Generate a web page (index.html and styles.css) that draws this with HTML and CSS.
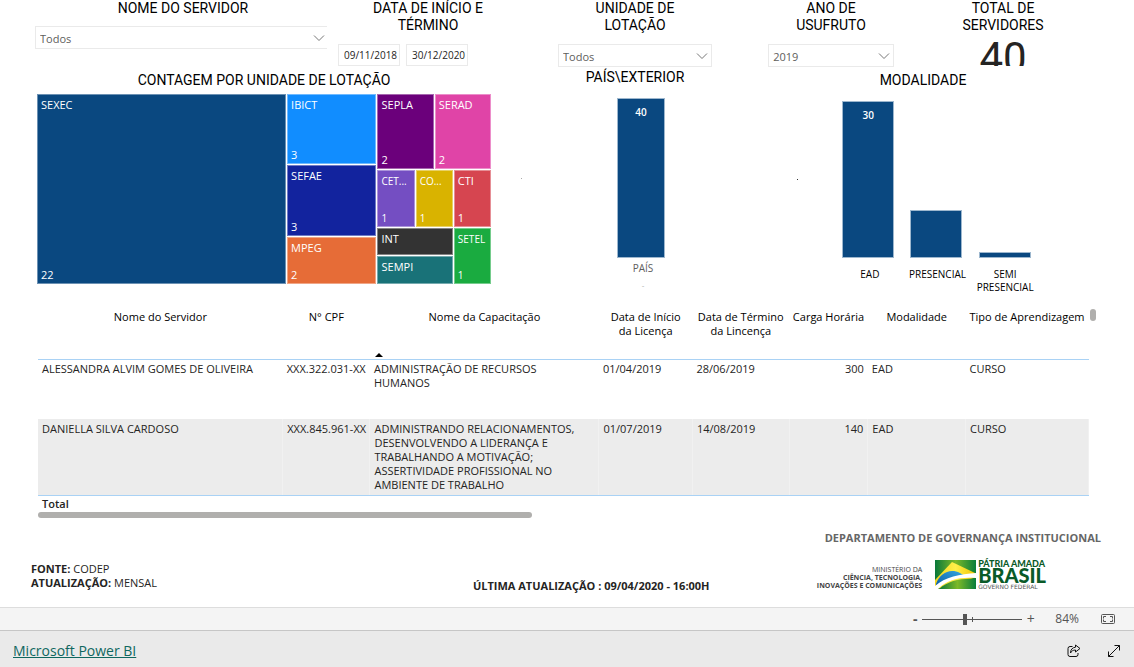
FILE: index.html
```html
<!DOCTYPE html>
<html lang="pt-BR">
<head>
<meta charset="utf-8">
<meta name="viewport" content="width=device-width, initial-scale=1">
<title>Microsoft Power BI</title>
<link rel="stylesheet" href="styles.css">
</head>
<body>
<main class="report">
  <section class="filters">
    <div class="filter filter-name">
      <label class="title" for="servidor">NOME DO SERVIDOR</label>
      <div class="picker picker-open">
        <select id="servidor"><option>Todos</option></select>
        <svg class="chevron" viewBox="0 0 12 8"><path d="M1 1.500 6 6.500 11 1.500"/></svg>
      </div>
    </div>
    <div class="filter filter-dates">
      <span class="title">DATA DE INÍCIO E<br>TÉRMINO</span>
      <div class="dates">
        <input type="text" value="09/11/2018" aria-label="Data de início">
        <input type="text" value="30/12/2020" aria-label="Data de término">
      </div>
    </div>
    <div class="filter filter-unit">
      <label class="title" for="unidade">UNIDADE DE<br>LOTAÇÃO</label>
      <div class="picker">
        <select id="unidade"><option>Todos</option></select>
        <svg class="chevron" viewBox="0 0 12 8"><path d="M1 1.500 6 6.500 11 1.500"/></svg>
      </div>
    </div>
    <div class="filter filter-year">
      <label class="title" for="ano">ANO DE<br>USUFRUTO</label>
      <div class="picker">
        <select id="ano"><option>2019</option></select>
        <svg class="chevron" viewBox="0 0 12 8"><path d="M1 1.500 6 6.500 11 1.500"/></svg>
      </div>
    </div>
    <div class="filter filter-total">
      <span class="title">TOTAL DE<br>SERVIDORES</span>
      <output class="total-value">40</output>
    </div>
  </section>

  <section class="charts">
    <div class="chart">
      <h2 class="title title-low">CONTAGEM POR UNIDADE DE LOTAÇÃO</h2>
      <div class="treemap">
        <div class="tile sexec"><span>SEXEC</span><span>22</span></div>
        <div class="stack">
          <div class="tile ibict"><span>IBICT</span><span>3</span></div>
          <div class="tile sefae"><span>SEFAE</span><span>3</span></div>
          <div class="tile mpeg"><span>MPEG</span><span>2</span></div>
        </div>
        <div class="stack-right">
          <div class="pair">
            <div class="tile sepla"><span>SEPLA</span><span>2</span></div>
            <div class="tile serad"><span>SERAD</span><span>2</span></div>
          </div>
          <div class="thirds">
            <div class="tile cet"><span>CET...</span><span>1</span></div>
            <div class="tile co"><span>CO...</span><span>1</span></div>
            <div class="tile cti"><span>CTI</span><span>1</span></div>
            <div class="tile int"><span>INT</span></div>
            <div class="tile sempi"><span>SEMPI</span></div>
            <div class="tile setel"><span>SETEL</span><span>1</span></div>
          </div>
        </div>
      </div>
    </div>
    <div class="chart chart-country">
      <h2 class="title">PAÍS\EXTERIOR</h2>
      <div class="country-plot">
        <span class="speck speck-light"></span>
        <div class="bar country-bar">40</div>
      </div>
      <div class="country-axis">PAÍS</div>
      <div class="country-axis country-mark">-</div>
    </div>
    <div class="chart chart-mode">
      <h2 class="title title-low">MODALIDADE</h2>
      <div class="mode-plot">
        <span class="speck"></span>
        <div class="bar" style="height:157px">30</div>
        <div class="bar" style="height:48px"></div>
        <div class="bar" style="height:6px"></div>
      </div>
      <div class="mode-axis"><span>EAD</span><span>PRESENCIAL</span><span>SEMI<br>PRESENCIAL</span></div>
    </div>
  </section>

  <section class="grid">
    <div class="grid-scroller">
      <table>
        <colgroup><col class="c-name"><col class="c-cpf"><col class="c-course"><col class="c-start"><col class="c-end"><col class="c-hours"><col class="c-mode"><col class="c-type"></colgroup>
        <thead>
          <tr><th>Nome do Servidor</th><th>N° CPF</th><th class="sorted">Nome da Capacitação<svg class="sort" viewBox="0 0 8 4"><path d="M0 4 4 0 8 4z"/></svg></th><th>Data de Início<br>da Licença</th><th>Data de Término<br>da Lincença</th><th>Carga Horária</th><th>Modalidade</th><th>Tipo de Aprendizagem</th></tr>
        </thead>
        <tbody>
          <tr><td>ALESSANDRA ALVIM GOMES DE OLIVEIRA</td><td>XXX.322.031-XX</td><td>ADMINISTRAÇÃO DE RECURSOS<br>HUMANOS</td><td>01/04/2019</td><td>28/06/2019</td><td class="num">300</td><td>EAD</td><td>CURSO</td></tr>
          <tr class="alt"><td>DANIELLA SILVA CARDOSO</td><td>XXX.845.961-XX</td><td>ADMINISTRANDO RELACIONAMENTOS,<br>DESENVOLVENDO A LIDERANÇA E<br>TRABALHANDO A MOTIVAÇÃO;<br>ASSERTIVIDADE PROFISSIONAL NO<br>AMBIENTE DE TRABALHO</td><td>01/07/2019</td><td>14/08/2019</td><td class="num">140</td><td>EAD</td><td>CURSO</td></tr>
        </tbody>
        <tfoot><tr><td colspan="8">Total</td></tr></tfoot>
      </table>
      <div class="scroll-x"></div>
    </div>
    <div class="scroll-y"></div>
  </section>

  <section class="credits">
    <p class="department">DEPARTAMENTO DE GOVERNANÇA INSTITUCIONAL</p>
    <div class="credits-row">
      <p class="source"><b>FONTE:</b> CODEP<br><b>ATUALIZAÇÃO:</b> MENSAL</p>
      <p class="updated">ÚLTIMA ATUALIZAÇÃO : 09/04/2020 - 16:00H</p>
      <div class="brand">
        <p class="ministry">MINISTÉRIO DA<br><b>CIÊNCIA, TECNOLOGIA,<br>INOVAÇÕES E COMUNICAÇÕES</b></p>
        <svg class="flag" viewBox="0 0 41 29">
          <defs>
            <linearGradient id="green" x1="0" y1="0" x2="1" y2="0"><stop offset="0" stop-color="#08783a"/><stop offset=".5" stop-color="#7db928"/><stop offset="1" stop-color="#087d3b"/></linearGradient>
            <linearGradient id="blue" x1="0" y1="1" x2="1" y2="0"><stop offset="0" stop-color="#0a5ca8"/><stop offset="1" stop-color="#36a8e0"/></linearGradient>
            <linearGradient id="gold" x1="0" y1="0" x2="1" y2="0"><stop offset="0" stop-color="#f0d31c"/><stop offset=".5" stop-color="#fff04a"/><stop offset="1" stop-color="#f2c500"/></linearGradient>
          </defs>
          <path fill="url(#green)" d="M0 0H41V29H0z"/>
          <path fill="url(#gold)" d="M0 20 17 2 40 13 41 17 10 29 0 28z"/>
          <path fill="url(#blue)" d="M1 24C5 13 15 8 25 13L30 16C18 16 9 20 1 27z"/>
          <path fill="#fff" d="M0 26C10 17 25 14 41 13V18C25 17 13 19 3 29H0z"/>
          <path fill="url(#green)" d="M4 29C14 20 27 18 41 19V29z"/>
        </svg>
        <p class="slogan"><span>PÁTRIA AMADA</span><strong>BRASIL</strong><small>GOVERNO FEDERAL</small></p>
      </div>
    </div>
  </section>
</main>

<div class="zoombar">
  <button type="button" class="step step-out" aria-label="Reduzir">-</button>
  <div class="zoom-track"><input type="range" min="0" max="100" value="42" aria-label="Zoom"></div>
  <button type="button" class="step" aria-label="Ampliar">+</button>
  <span class="zoom-value">84%</span>
  <button type="button" class="fit" aria-label="Ajustar à página"><svg viewBox="0 0 14 10"><rect x=".5" y=".5" width="13" height="9" rx="1"/><path d="M5 2.500H2.500V4.500M2.500 5.500V7.500H5M9 2.500H11.500V4.500M11.500 5.500V7.500H9"/></svg></button>
</div>
<footer class="appbar">
  <a href="#">Microsoft Power BI</a>
  <div class="actions">
    <button type="button" aria-label="Compartilhar"><svg viewBox="0 0 14 14"><path d="M5.500 2.500H3A2 2 0 0 0 1 4.500V10.500A2 2 0 0 0 3 12.500H9A2 2 0 0 0 11 10.500V9M8.500 1 13 4.500 8.500 8V6C6 6 4.500 7 3.500 9 3.500 5.500 5.500 3.500 8.500 3.200z"/></svg></button>
    <button type="button" aria-label="Tela inteira"><svg viewBox="0 0 14 14"><path d="M1.500 12.500 12.500 1.500M7.500 1.500H12.500V6.500M1.500 7.500V12.500H6.500"/></svg></button>
  </div>
</footer>
</body>
</html>
```
FILE: styles.css
```css
* { box-sizing: border-box; }

body {
  margin: 0;
  min-height: 100vh;
  display: flex;
  flex-direction: column;
  background: #fff;
  color: #252423;
  font: 11px/14px "Open Sans", "Noto Sans", sans-serif;
}

h2, p { margin: 0; }
button, input, select { font: inherit; color: inherit; }
button { padding: 0; border: 0; background: none; }
svg { display: block; fill: none; stroke: currentColor; }

.report { flex: 1; }

.title {
  display: block;
  text-align: center;
  color: #000;
  font: 400 14px/17px Roboto, sans-serif;
}
.title-low { padding-top: 3px; }

/* Filters */
.filters {
  display: grid;
  grid-template-columns: 296fr 194fr 220fr 172fr 172fr;
  padding: 0 45px 0 35px;
}
.picker { position: relative; margin: 10px auto 0; }
.filter-name .picker { margin: 9px 4px 0 0; }
.filter-unit .picker { width: 70%; }
.filter-year .picker { width: 73%; }
.picker select {
  appearance: none;
  display: block;
  width: 100%;
  height: 23px;
  padding: 2px 4px 0;
  border: 1px solid #eaeaea;
  border-radius: 0;
  background: #fff;
  color: #605e5c;
}
.picker-open select { border-right: 0; }
.chevron {
  position: absolute;
  top: 8px;
  right: 4px;
  width: 12px;
  height: 8px;
  color: #777;
  pointer-events: none;
}
.picker-open .chevron { right: 2px; }
.dates { display: flex; gap: 6px; padding: 10px 0 0 7px; }
.dates input {
  width: 62px;
  height: 22px;
  padding: 0 0 0 5px;
  border: 1px solid #eaeaea;
  font-size: 10px;
}
.total-value {
  display: block;
  height: 24px;
  margin-top: 8px;
  overflow: hidden;
  text-align: center;
  font: 400 42px/32px Roboto, sans-serif;
}

/* Charts */
.charts {
  display: grid;
  grid-template-columns: 454fr 288fr 288fr;
  padding: 2px 67px 0 37px;
}
.treemap {
  display: grid;
  grid-template-columns: 248fr 89fr 113fr;
  gap: 1px;
  height: 190px;
  margin-top: 5px;
}
.stack { display: grid; grid-template-rows: 70fr 70fr 47fr; gap: 1px; }
.stack-right { display: grid; grid-template-rows: 75fr 114fr; gap: 1px; }
.pair { display: grid; grid-template-columns: 1fr 1fr; gap: 1px; }
.thirds {
  display: grid;
  grid-template-columns: repeat(3, 1fr);
  grid-template-rows: 56fr 27fr 28fr;
  gap: 1px;
}
.tile {
  display: flex;
  flex-direction: column;
  justify-content: space-between;
  min-width: 0;
  min-height: 0;
  padding: 3px 3px 1px;
  border: 1px solid rgba(255, 255, 255, 0.4);
  color: #fff;
  white-space: nowrap;
}
.sexec { background-color: #0a4880; }
.ibict { background-color: #118dff; }
.sefae { background-color: #12239e; }
.mpeg { background-color: #e66c37; }
.sepla { background-color: #6b007b; }
.serad { background-color: #e044a7; }
.cet { background-color: #744ec2; }
.co { background-color: #d9b300; }
.cti { background-color: #d64550; }
.int { grid-column: 1 / 3; background-color: #333; }
.sempi { grid-column: 1 / 3; background-color: #197278; }
.setel { grid-column: 3; grid-row: 2 / 4; background-color: #1aab40; }
.setel, .cet, .co { font-size: 10px; }

.bar {
  padding-top: 6px;
  border: 1px solid #9db7ce;
  background: #0a4880;
  color: #fff;
  text-align: center;
  font-size: 10px;
  font-weight: 600;
}
.bar:empty { padding: 0; }
.country-plot, .mode-plot { position: relative; }
.country-plot { padding: 12px 0 0 12px; }
.country-bar { width: 48px; height: 160px; margin: 0 auto; }
.country-axis { padding: 3px 0 0 16px; color: #605e5c; text-align: center; font-size: 10px; }
.country-mark { color: #aaa; font-size: 8px; }
.mode-plot {
  display: grid;
  grid-template-columns: repeat(3, 1fr);
  align-items: end;
  justify-items: center;
  height: 169px;
  padding: 0 28px 0 55px;
}
.mode-plot .bar { width: 52px; }
.mode-axis {
  display: grid;
  grid-template-columns: repeat(3, 1fr);
  padding: 10px 28px 0 57px;
  color: #000;
  text-align: center;
  font-size: 10px;
  line-height: 13px;
}
.speck {
  position: absolute;
  top: 90px;
  left: 18px;
  width: 1px;
  height: 1px;
  background: #333;
}
.speck-light { top: 92px; left: 30px; background: #aaa; }

/* Table */
.grid { display: flex; gap: 1px; padding: 10px 38px 0 38px; }
.grid-scroller { flex: 1; }
table { width: 100%; border-collapse: collapse; table-layout: fixed; }
.c-name { width: 23.3%; }
.c-cpf { width: 8.3%; }
.c-course { width: 21.8%; }
.c-start { width: 8.9%; }
.c-end { width: 9.2%; }
.c-hours { width: 7.5%; }
.c-mode { width: 9.3%; }
.c-type { width: 11.7%; }
th {
  position: relative;
  height: 55px;
  padding: 6px 0 0;
  border-bottom: 1px solid #a9d2f5;
  vertical-align: top;
  color: #000;
  font-weight: 400;
  white-space: nowrap;
}
.sort {
  position: absolute;
  bottom: 2px;
  left: 5px;
  width: 8px;
  height: 4px;
  fill: #000;
  stroke: none;
}
td { height: 60px; padding: 2px 4px; vertical-align: top; white-space: nowrap; }
.alt { background: #ececec; }
.alt td { padding: 3px 4px; border-right: 1px solid #f1f1f1; border-bottom: 1px solid #a9d2f5; }
.num { text-align: right; }
tfoot td { height: 16px; padding: 1px 4px 0; font-weight: 600; }
.scroll-x { width: 47%; height: 6px; border-radius: 3px; background: #b0afad; }
.scroll-y { width: 6px; height: 12px; margin-top: 5px; border-radius: 3px; background: #b0afad; }

/* Credits */
.credits { padding: 13px 33px 12px 31px; }
.department { text-align: right; color: #666; font-weight: 700; }
.credits-row {
  display: grid;
  grid-template-columns: minmax(0, 440fr) auto minmax(0, 335fr);
  padding: 14px 55px 0 0;
}
.source { padding-top: 3px; }
.source b { font-weight: 700; }
.updated { padding-top: 20px; font-weight: 700; }
.brand { display: flex; justify-content: flex-end; align-items: flex-start; }
.ministry { padding: 7px 13px 0 0; color: #444; text-align: right; font-size: 7px; line-height: 8px; white-space: nowrap; }
.flag { width: 41px; height: 29px; margin-top: 1px; stroke: none; }
.slogan { display: flex; flex-direction: column; padding-left: 2px; color: #0a5a28; font-family: Lato, sans-serif; }
.slogan span { font-size: 9px; line-height: 9px; font-weight: 900; }
.slogan strong { font-size: 20px; line-height: 15px; font-weight: 900; }
.slogan small { color: #555; font: 6px/7px "DejaVu Sans", sans-serif; }

/* Zoom bar */
.zoombar {
  display: flex;
  align-items: center;
  justify-content: flex-end;
  height: 24px;
  padding-right: 19px;
  border-top: 1px solid #ddd;
  border-bottom: 1px solid #c6c6c6;
  background: #f4f4f4;
  color: #555;
  font-size: 12px;
}
.step { width: 17px; font-size: 14px; }
.step-out { width: 14px; font-weight: 700; }
.zoom-track { position: relative; width: 100px; height: 14px; }
.zoom-track::after {
  content: "";
  position: absolute;
  top: 5px;
  left: 50%;
  width: 1px;
  height: 5px;
  background: #555;
}
.zoom-track input { appearance: none; display: block; width: 100%; height: 14px; margin: 0; background: none; }
.zoom-track input::-webkit-slider-runnable-track { height: 1px; background: #555; }
.zoom-track input::-webkit-slider-thumb { appearance: none; width: 4px; height: 11px; margin-top: -5px; background: #555; }
.zoom-value { margin: 0 22px 0 16px; }
.fit svg { width: 14px; height: 10px; }

/* App bar */
.appbar {
  display: flex;
  align-items: center;
  justify-content: space-between;
  height: 36px;
  padding: 4px 13px 0;
  background: #eaeaea;
}
.appbar a { color: #0f675f; font-size: 14px; line-height: 20px; }
.actions { display: flex; gap: 26px; color: #111; }
.actions svg { width: 14px; height: 14px; }
```
